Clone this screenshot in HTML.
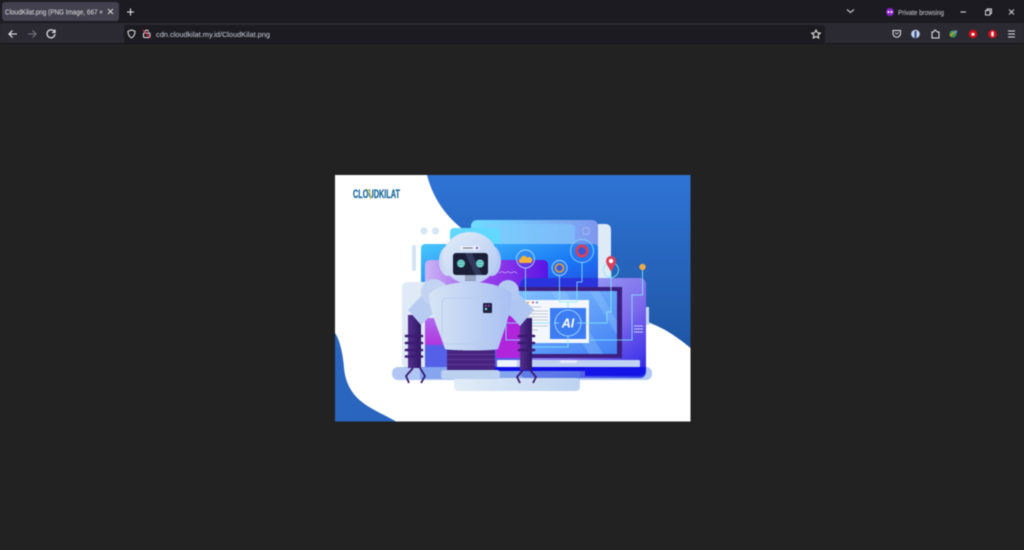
<!DOCTYPE html>
<html><head><meta charset="utf-8"><style>
html,body{margin:0;padding:0;width:1024px;height:550px;overflow:hidden;background:#222}
svg{display:block;filter:blur(.45px)}
text{font-family:"Liberation Sans",sans-serif}
</style></head><body>
<svg width="1024" height="550" viewBox="0 0 1024 550" xmlns="http://www.w3.org/2000/svg">
<defs>
<linearGradient id="bl" x1="0" y1="0" x2="0" y2="1"><stop offset="0" stop-color="#2f74d6"/><stop offset="1" stop-color="#1f56a4"/></linearGradient>
<linearGradient id="win" x1="0" y1="0" x2="1" y2="0"><stop offset="0" stop-color="#6fdcff"/><stop offset="1" stop-color="#7f97ee"/></linearGradient>
<linearGradient id="in" x1="0" y1="0" x2="1" y2="1"><stop offset="0" stop-color="#48c8fc"/><stop offset=".55" stop-color="#1a78f6"/><stop offset="1" stop-color="#2a38d8"/></linearGradient>
<linearGradient id="mag" x1="0" y1="0" x2="1" y2="0"><stop offset="0" stop-color="#c9b6f6"/><stop offset=".5" stop-color="#9a40ea"/><stop offset="1" stop-color="#5a14e4"/></linearGradient>
<linearGradient id="pink" x1="0" y1="0" x2="0" y2="1"><stop offset="0" stop-color="#b068ee"/><stop offset="1" stop-color="#b01ed8"/></linearGradient>
<linearGradient id="lap" x1="0" y1="0" x2="1" y2="1"><stop offset="0" stop-color="#a4bcf8"/><stop offset=".6" stop-color="#7f6cec"/><stop offset="1" stop-color="#2a20e8"/></linearGradient>
<linearGradient id="scr" x1="0" y1="0" x2="1" y2="1"><stop offset="0" stop-color="#86c6ff"/><stop offset="1" stop-color="#4480f4"/></linearGradient>
<linearGradient id="rob" x1="0" y1="0" x2="1" y2="1"><stop offset="0" stop-color="#e2edf8"/><stop offset="1" stop-color="#b2c8f2"/></linearGradient>
<linearGradient id="tor" x1="0" y1="0" x2="1" y2="0"><stop offset="0" stop-color="#d6e5f5"/><stop offset="1" stop-color="#a8bff2"/></linearGradient>
<linearGradient id="lo" x1="0" y1="0" x2="1" y2="0"><stop offset="0" stop-color="#e2edf8"/><stop offset="1" stop-color="#bcd2f0"/></linearGradient>
<linearGradient id="arm" x1="0" y1="0" x2="1" y2="0"><stop offset="0" stop-color="#55308e"/><stop offset="1" stop-color="#2e1766"/></linearGradient>
</defs>

<!-- browser chrome -->
<rect width="1024" height="24" fill="#1c1b22"/>
<rect y="23" width="1024" height="21" fill="#2b2a33"/>
<rect y="43" width="1024" height="1" fill="#17161c"/>
<rect x="2" y="2" width="117" height="19" rx="3" fill="#42414d"/>
<text x="5" y="14.500" font-size="7.200" fill="#e4e4e8" textLength="98" lengthAdjust="spacingAndGlyphs">CloudKilat.png (PNG Image, 667 ×</text>
<path d="M108 9l5 5M113 9l-5 5" stroke="#d8d8dc" stroke-width="1"/>
<path d="M130.500 8.500v7M127 12h7" stroke="#e8e8ec" stroke-width="1.100"/>
<!-- nav -->
<path d="M17 34H9M12.500 30.500L9 34l3.500 3.500" stroke="#f0f0f4" stroke-width="1.100" fill="none"/>
<path d="M28 34h8M32.500 30.500L36 34l-3.500 3.500" stroke="#77767e" stroke-width="1.100" fill="none"/>
<path d="M54.300 31.500a4 4 0 1 0 .7 2.500M55 29.500v3h-3" stroke="#f0f0f4" stroke-width="1.100" fill="none"/>
<rect x="124" y="25" width="701" height="18" rx="3" fill="#1c1b22"/>
<path d="M131.500 30l3.500 1.200c0 3-1 5.300-3.500 6.800-2.500-1.500-3.500-3.800-3.500-6.800z" stroke="#e8e8ec" stroke-width="1" fill="none"/>
<rect x="143.500" y="33" width="6.500" height="4.500" rx="1" fill="none" stroke="#e8e8ec" stroke-width="1"/>
<path d="M145 33v-1.500a1.800 1.800 0 0 1 3.500 0" stroke="#e8e8ec" stroke-width="1" fill="none"/>
<path d="M143 30l7.500 8" stroke="#e2304a" stroke-width="1.200"/>
<text x="156" y="37" font-size="7.600" fill="#ccd0dc" textLength="114" lengthAdjust="spacingAndGlyphs">cdn.cloudkilat.my.id/CloudKilat.png</text>
<path d="M816 30l1.300 2.700 3 .4-2.200 2 .6 3-2.700-1.500-2.700 1.500.6-3-2.200-2 3-.4z" stroke="#eee" stroke-width="1" fill="none"/>
<!-- title right -->
<path d="M847 9.500l3.500 3 3.500-3" stroke="#e4e4e8" stroke-width="1" fill="none"/>
<circle cx="890" cy="12" r="4" fill="#8a22c8"/><circle cx="888.500" cy="12" r="1.100" fill="#eee"/><circle cx="891.500" cy="12" r="1.100" fill="#eee"/>
<text x="898" y="14.800" font-size="7" fill="#d0d0d6" textLength="46" lengthAdjust="spacingAndGlyphs">Private browsing</text>
<path d="M960.500 12h5.500" stroke="#e4e4e8" stroke-width="1"/>
<rect x="985.500" y="10.500" width="4.500" height="4.500" fill="none" stroke="#e4e4e8" stroke-width=".9"/><path d="M987 10.500V9h4.500v4.500H990" fill="none" stroke="#e4e4e8" stroke-width=".9"/>
<path d="M1009 9.500l5 5M1014 9.500l-5 5" stroke="#d8d8dc" stroke-width=".9"/>
<!-- toolbar right -->
<path d="M893 30.500h7.500v3a3.700 3.700 0 0 1-7.500 0z" stroke="#e8e8ec" fill="none"/><path d="M895 32.500l1.800 1.500 1.800-1.500" stroke="#e8e8ec" stroke-width=".8" fill="none"/>
<circle cx="915.500" cy="34" r="4.300" fill="#c9d6ea"/><path d="M915.500 31v7" stroke="#34508c" stroke-width="2.200"/>
<path d="M932 32h1.500l1.500-2 2.500 2h1.500v6h-7z" stroke="#e8e8ec" fill="none"/>
<circle cx="953" cy="34" r="3.500" fill="#3a9a50"/><path d="M950 36l3-3 4-2" stroke="#d8a030" stroke-width="1.300" fill="none"/><circle cx="955.500" cy="32" r="1.500" fill="#5a8fe0"/>
<circle cx="973" cy="34" r="4.200" fill="#d0101c"/><rect x="971.500" y="33" width="3" height="2.600" fill="#fff"/>
<circle cx="992.500" cy="34" r="4.300" fill="#d0101c"/><rect x="991.300" y="31.500" width="2.400" height="5" rx="1" fill="#fff"/>
<path d="M1008 31h7M1008 34h7M1008 37h7" stroke="#dcdce0"/>

<!-- image -->
<rect x="335" y="175" width="355.500" height="246.500" fill="#fff"/>
<path d="M427 175H690.500V348C675 335 663 328 650 323L620 310 480 240 460 227C443 213 432 195 427 175Z" fill="url(#bl)"/>
<path d="M335 333C340 340 343 355 344 368 345 380 350 393 362 402 372 410 385 415 396 421.500H335Z" fill="#2a66bf"/>
<!-- logo -->
<text x="353" y="198" font-size="12" font-weight="bold" fill="#1f6a9e" stroke="#1f6a9e" stroke-width=".35" textLength="47" lengthAdjust="spacingAndGlyphs">CLOUDKILAT</text>
<path d="M366 189c3 .5 5 4.500 4.500 10" stroke="#e6d23a" stroke-width="1" fill="none"/>
<!-- dots and bar -->
<circle cx="424" cy="231" r="3.600" fill="#d6e6f4"/><circle cx="435.500" cy="231" r="3.600" fill="#d6e6f4"/>
<rect x="412" y="245" width="4" height="26" rx="2" fill="#d3e4f4"/>
<!-- back panels -->
<rect x="560" y="224" width="51" height="80" rx="5" fill="#deeaf6"/>
<rect x="471" y="220" width="127" height="70" rx="6" fill="url(#win)"/>
<rect x="485" y="224" width="90" height="22" rx="4" fill="#7fcbff" opacity=".55"/>
<circle cx="586" cy="231" r="3.500" fill="none" stroke="#a8b8ee"/>
<rect x="450" y="228" width="50" height="30" rx="4" fill="#62d8ff"/>
<rect x="421" y="244" width="177" height="60" rx="4" fill="url(#in)"/>
<rect x="425" y="260" width="123" height="60" rx="5" fill="url(#mag)"/>
<!-- laptop -->
<rect x="520" y="278" width="126" height="100" rx="6" fill="url(#lap)"/>
<path d="M526 278H598V288H520V284a6 6 0 0 1 6-6z" fill="#2a34dc"/>
<rect x="646" y="307" width="3" height="18" fill="#c8d8f2"/>
<rect x="402" y="282" width="44" height="86" rx="5" fill="#dfeaf6"/>
<rect x="425" y="318" width="100" height="40" fill="url(#pink)"/>
<rect x="425" y="345" width="100" height="22" fill="#5560e8"/>
<rect x="496" y="287" width="126" height="71" fill="#3c1f80"/>
<rect x="496" y="291" width="121" height="63" fill="url(#scr)"/>
<path d="M565 291l38 63h-14l-38-63zM590 291l27 44v-14l-18-30z" fill="#9ad0ff" opacity=".3"/>
<rect x="496" y="316" width="25" height="42" fill="#b024dc"/>
<path d="M634 326h9M634 329h9M634 332h9" stroke="#c8cdf4" stroke-width=".9"/>
<!-- base -->
<rect x="392" y="367" width="260" height="13" rx="6" fill="#3a74e4" opacity=".4"/>
<rect x="420" y="367" width="160" height="12" fill="#5a84e8" opacity=".5"/>
<rect x="454" y="367" width="135" height="4" fill="#1010e4"/>
<path d="M585 367H646V370a6 6 0 0 1-6 6H585z" fill="#1414e6"/>
<rect x="454" y="378" width="126" height="13" rx="4" fill="url(#lo)"/>
<rect x="497" y="360" width="143" height="7" rx="1" fill="#c0d2f4"/>
<rect x="497" y="360" width="20" height="7" rx="1" fill="#eef4fb"/>
<rect x="560" y="360" width="17" height="3" rx="1" fill="#e4ecf8"/>
<rect x="441" y="370" width="59" height="9" rx="3" fill="#bcd0f0"/>
<!-- app window -->
<rect x="520" y="300" width="69" height="43" fill="#f4f7fd"/>
<circle cx="528" cy="302.500" r="1" fill="#f0a030"/><circle cx="533" cy="302.500" r="1" fill="#e04060"/><circle cx="537" cy="302.500" r="1" fill="#4090f0"/>
<path d="M526 307h15M526 311h22M526 314h22M526 317h22M526 320h22M526 323h22M526 326h22M526 330h12" stroke="#c2c8d0" stroke-width=".9"/>
<rect x="550" y="308" width="36" height="31" fill="#3d7cf2"/>
<circle cx="568" cy="323" r="13" fill="none" stroke="#a8e4ff" stroke-width=".8"/>
<path d="M568 302v6M568 336v4M554 323h5M577 323h5" stroke="#a8e4ff" stroke-width=".8"/>
<text x="568" y="327.500" font-size="12.500" font-weight="bold" font-style="italic" fill="#fff" text-anchor="middle">AI</text>
<!-- circuit lines -->
<g stroke="#84eefa" stroke-width=".8" fill="none">
<path d="M525.500 268V300M559.500 276V302H577V282H582V262.500M568 302V308"/>
<path d="M611 271V312H607V323H582M642.500 270V295H632V340H590M506 310V340H520M506 323H550M568 339V347H532"/>
</g>
<!-- icon circles -->
<circle cx="525.500" cy="259" r="9" fill="#3c7cf0" fill-opacity=".25" stroke="#a4dcff" stroke-width=".9"/>
<path d="M520 263a2.300 2.300 0 0 1 .5-4.300 3.500 3.500 0 0 1 6.500-1 3 3 0 0 1 4 5.300z" fill="#f4b03a"/>
<circle cx="559.500" cy="268" r="7.500" fill="#3c7cf0" fill-opacity=".25" stroke="#a4dcff" stroke-width=".9"/>
<circle cx="559.500" cy="268" r="4" fill="#3a5ce0" stroke="#f0a030" stroke-width="1.600"/>
<circle cx="582" cy="251" r="11.500" fill="#3c7cf0" fill-opacity=".25" stroke="#8ed0fa" stroke-width=".9"/>
<circle cx="582" cy="251" r="5.200" fill="#3358d8" stroke="#d8405c" stroke-width="2.800"/>
<circle cx="611" cy="270" r="7.500" fill="none" stroke="#7fe8f8" stroke-width=".8"/>
<path d="M611 256a5 5 0 0 1 5 5c0 3-3 7-5 10.500-2-3.500-5-7.500-5-10.500a5 5 0 0 1 5-5z" fill="#d8405c"/>
<circle cx="611" cy="261" r="2.200" fill="#fff"/>
<circle cx="642.500" cy="267" r="3.200" fill="#eda94c"/>
<path d="M499 273l3-1.500 3 1.500 3-1.500 3 1.500 3-1.500 3 1.500" stroke="#c8a8f4" stroke-width=".7" fill="none"/>
<!-- robot arms -->
<rect x="408" y="315" width="13" height="53" fill="url(#arm)"/>
<path d="M406 336h16M406 343h16M406 350h16M406 356.500h16" stroke="#3c1a72" stroke-width="2.600" stroke-linecap="round"/>
<rect x="520" y="318" width="12" height="52" fill="url(#arm)"/>
<path d="M519 336h15M519 343h15M519 350h15" stroke="#3c1a72" stroke-width="2.600" stroke-linecap="round"/>
<path d="M413 368l-7 8 3 7M420 368l5 8-4 7" stroke="#3c1a72" stroke-width="1.800" fill="none"/>
<path d="M523 370l-6 7 3 6M530 370l6 7-3 6" stroke="#3c1a72" stroke-width="1.800" fill="none"/>
<!-- abdomen -->
<rect x="447" y="350" width="48" height="20" fill="#46237e"/>
<path d="M447 354.500h48M447 359.500h48M447 364.500h48" stroke="#6a44a0" stroke-width=".8"/>
<!-- shoulders -->
<path d="M408 310l16-17 16 14-19 18z" fill="#b8ccf2"/>
<path d="M534 310l-16-17-14 16 16 17z" fill="#b0c6f2"/>
<circle cx="434" cy="292" r="13" fill="#c3d4f2"/>
<circle cx="508" cy="291" r="11" fill="#b4c9f2"/>
<!-- torso -->
<path d="M429 294C445 278 497 278 512 294 512 310 505 328 498 349 495 351 450 351 445 349 438 328 429 310 429 294Z" fill="url(#tor)"/>
<rect x="442" y="298" width="56" height="46" rx="5" fill="none" stroke="#b6cbec" stroke-width=".8"/>
<rect x="483" y="303" width="9" height="10" rx="1" fill="#1d2440"/>
<rect x="485" y="305" width="1.500" height="1.500" fill="#e030d0"/><rect x="488" y="305" width="1.500" height="1.500" fill="#e030d0"/><rect x="485" y="308" width="2" height="2" fill="#a8e0e8"/>
<!-- head -->
<ellipse cx="448" cy="261" rx="9" ry="15" fill="#c9d9f2"/>
<ellipse cx="492" cy="261" rx="9" ry="15" fill="#b4c8f0"/>
<ellipse cx="470" cy="258" rx="27.500" ry="26" fill="url(#rob)"/>
<rect x="460" y="246" width="20" height="4" rx="2" fill="#eaf0fa"/><path d="M463 248h10" stroke="#6a7080"/><rect x="476" y="247" width="2" height="2" fill="#8050d0"/>
<rect x="453" y="253" width="35" height="22" rx="3" fill="#1a1e36"/>
<path d="M465 253h7l10 22h-7z" fill="#32385a"/>
<circle cx="461" cy="263.500" r="4" fill="#72d4ca"/><circle cx="480" cy="263.500" r="4" fill="#72d4ca"/>
<path d="M457 262h8M457 264.500h8M476 262h8M476 264.500h8" stroke="#3e8f98" stroke-width=".5"/>
<rect x="465" y="275" width="11" height="6" fill="#8c9ab8"/>
<path d="M465 277h11M465 279h11" stroke="#c0cadc" stroke-width=".6"/>
</svg>
</body></html>
